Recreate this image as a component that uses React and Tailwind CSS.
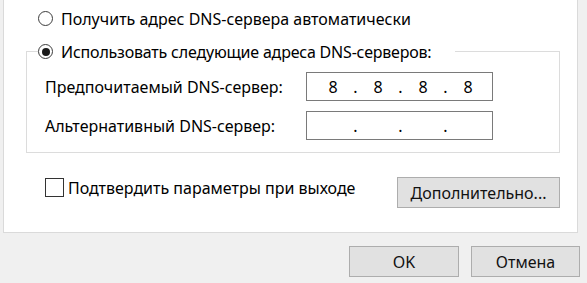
const Radio = ({ checked }) => (
  <span className="relative flex h-[15px] w-[15px] shrink-0 items-center justify-center rounded-full border border-[#3c3c3c] bg-white">
    {checked && <span className="h-[8px] w-[8px] rounded-full bg-[#1a1a1a]" />}
  </span>
);

const IpField = ({ parts }) => (
  <div className="flex h-[29px] w-[187px] items-center border border-[#7a7a7a] bg-white pl-[7px]">
    {parts.map((p, i) => (
      <div key={i} className="flex items-center">
        <span className="w-[38px] text-center">{p}</span>
        {i < 3 && <span className="w-[7px] text-center">.</span>}
      </div>
    ))}
  </div>
);

const Button = ({ children, className = '' }) => (
  <button className={`flex h-[31px] items-center justify-center border border-[#adadad] bg-[#e1e1e1] text-[#111] ${className}`}>
    {children}
  </button>
);

export default function App() {
  return (
    <div
      className="h-[283px] w-[587px] overflow-hidden bg-[#f0f0f0] text-[16px] leading-none text-black"
      style={{ fontFamily: '"Noto Sans", sans-serif' }}
    >
      <div className="ml-[3px] flex h-[233px] w-[575px] flex-col border-x border-b border-[#dadada] bg-white">
        {/* auto option */}
        <div className="ml-[34px] mt-[11px] flex h-[15px] items-center gap-[8px]">
          <Radio />
          <span>Получить адрес DNS-сервера автоматически</span>
        </div>

        {/* group box */}
        <div className="relative ml-[22px] mt-[25px] w-[534px] border border-[#dcdcdc] pb-[12px] pl-[18px] pt-[20px]">
          <div className="absolute -top-[8px] left-[11px] flex h-[15px] w-[417px] items-center gap-[8px] whitespace-nowrap bg-white">
            <Radio checked />
            <span className="tracking-[-0.2px]">Использовать следующие адреса DNS-серверов:</span>
          </div>
          <div className="flex items-center">
            <span className="w-[261px]">Предпочитаемый DNS-сервер:</span>
            <IpField parts={['8', '8', '8', '8']} />
          </div>
          <div className="mt-[10px] flex items-center">
            <span className="w-[261px]">Альтернативный DNS-сервер:</span>
            <IpField parts={['', '', '', '']} />
          </div>
        </div>

        {/* confirm + advanced */}
        <div className="mt-[24px] flex items-start">
          <label className="ml-[41px] mt-[1px] flex items-center gap-[4px]">
            <span className="h-[19px] w-[19px] border border-[#333333] bg-white" />
            <span>Подтвердить параметры при выходе</span>
          </label>
          <Button className="ml-auto mr-[17px] w-[163px]">Дополнительно...</Button>
        </div>
      </div>

      <div className="flex justify-end gap-[12px] pr-[7px] pt-[13px]">
        <Button className="w-[110px]">OK</Button>
        <Button className="w-[109px]">Отмена</Button>
      </div>
    </div>
  );
}
